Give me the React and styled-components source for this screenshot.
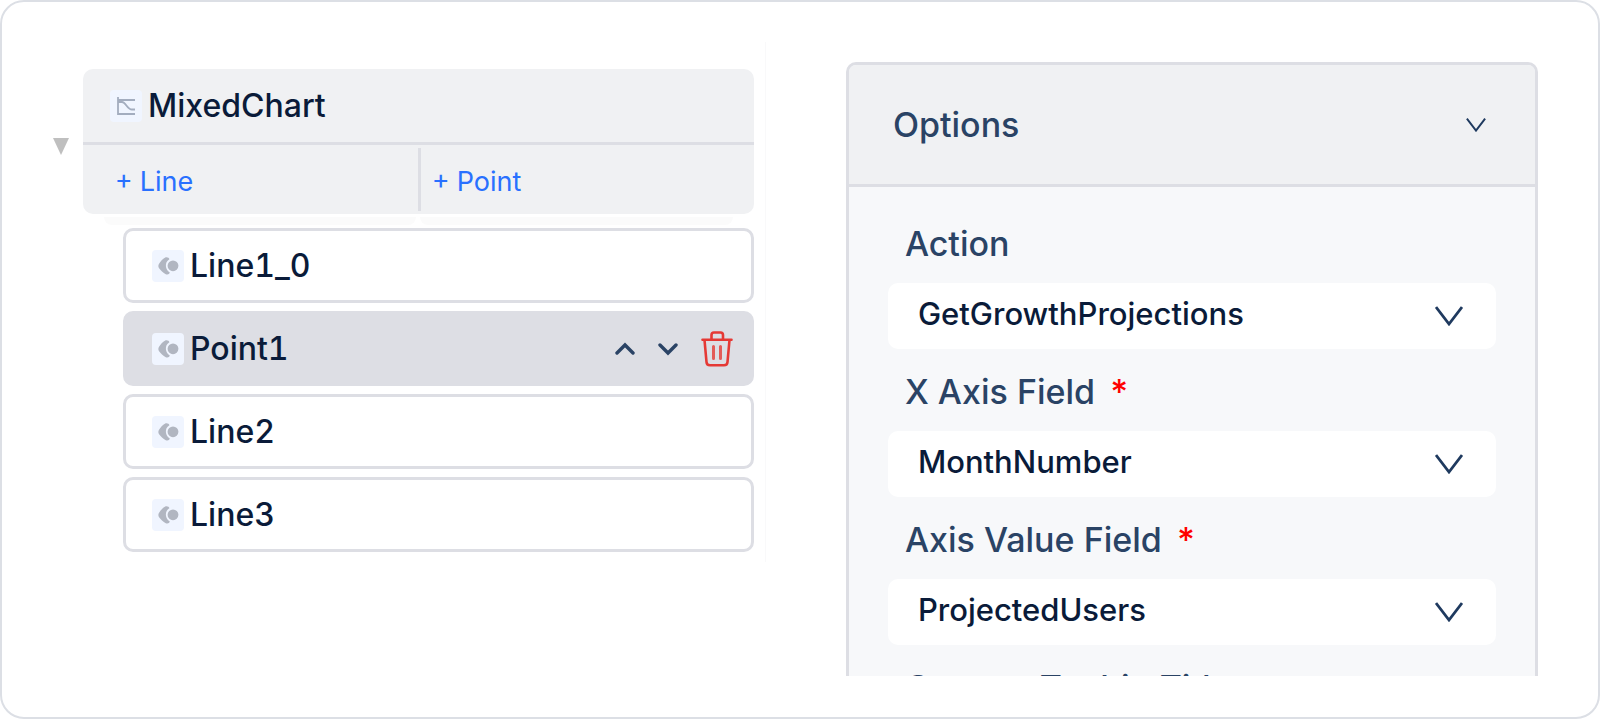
import React, { useState } from 'react';
import styled, { createGlobalStyle } from 'styled-components';

const GlobalStyle = createGlobalStyle`
  * {
    box-sizing: border-box;
  }
  body {
    margin: 0;
    background: #ffffff;
    color: #0a1b39;
    font-family: Inter, "Liberation Sans", sans-serif;
    font-optical-sizing: none;
    font-variant-numeric: tabular-nums;
  }
  button, select {
    font: inherit;
    font-variant-numeric: inherit;
    color: inherit;
  }
`;

const Page = styled.main`
  min-height: 100vh;
  display: grid;
  grid-template-columns: 1.03fr 1fr;
  column-gap: 80px;
  align-items: start;
  padding: 40px 60px 40px 51px;
  border: 2px solid #dcdfe5;
  border-radius: 24px;
`;

const Tree = styled.section`
  padding: 27px 11px 10px 0;
  border-right: 1px solid #f9f9fa;
`;

const Parent = styled.div`
  display: flex;
  align-items: center;
  gap: 14px;
`;

const Toggle = styled.button`
  display: flex;
  padding: 10px 0 0;
  border: 0;
  background: none;
`;

const ParentCard = styled.div`
  flex: 1;
  overflow: hidden;
  border-radius: 10px;
  background: #f0f1f3;
`;

const ParentTitle = styled.div`
  height: 76px;
  display: flex;
  align-items: center;
  gap: 6px;
  padding: 0 27px;
  border-bottom: 3px solid #dddee4;
`;

const AddBar = styled.div`
  display: grid;
  grid-template-columns: 1.015fr 1fr;
  padding: 3px 0;
`;

const AddButton = styled.button`
  height: 63px;
  padding: 3px 11px 0 ${props => (props.$first ? '32px' : '11px')};
  border: 0;
  border-right: ${props => (props.$first ? '3px solid #dddee4' : '0')};
  background: none;
  color: #2970ff;
  font-size: 27px;
  text-align: left;
`;

const Shades = styled.div`
  display: grid;
  grid-template-columns: 1fr 1fr;
  gap: 4px;
  margin: 3px 21px 0 51px;
`;

const Shade = styled.div`
  height: 8px;
  border-radius: 0 0 8px 8px;
  background: #fbfbfb;
`;

const List = styled.ul`
  display: flex;
  flex-direction: column;
  gap: 8px;
  margin: 3px 0 0 70px;
  padding: 0;
  list-style: none;
`;

const Item = styled.li`
  height: 75px;
  display: flex;
  align-items: center;
  gap: 6px;
  padding: 0 18px 0 26px;
  border: 3px solid #dddee4;
  border-radius: 10px;
  background: ${props => (props.$selected ? '#dddee4' : '#ffffff')};
`;

const Tile = styled.span`
  width: 32px;
  height: 32px;
  display: flex;
  align-items: center;
  justify-content: center;
  border-radius: 4px;
  background: #f0f5ff;
`;

const Name = styled.span`
  flex: 1;
  font-size: 32px;
  font-weight: 500;
  line-height: 40px;
`;

const Actions = styled.div`
  display: flex;
  align-items: center;
  gap: 23px;
`;

const IconButton = styled.button`
  display: flex;
  padding: 0;
  border: 0;
  background: none;
`;

const Panel = styled.section`
  height: 614px;
  margin-top: 20px;
  overflow: hidden;
  border: 3px solid #dddee4;
  border-bottom: 0;
  border-radius: 10px 10px 0 0;
  background: #f7f8fa;
`;

const PanelHeader = styled.button`
  width: 100%;
  height: 122px;
  display: flex;
  align-items: center;
  justify-content: space-between;
  padding: 0 49px 0 44px;
  border: 0;
  border-bottom: 3px solid #dddee4;
  background: #f0f1f3;
  color: #2a4365;
  font-size: 34px;
  font-weight: 500;
`;

const Fields = styled.div`
  padding: 14px 39px 0;
`;

const Label = styled.label`
  display: block;
  padding: 23px 17px 19px;
  color: #2a4365;
  font-size: 34px;
  font-weight: 500;
  line-height: 40px;
`;

const Required = styled.span`
  margin-left: 4px;
  color: #ff0000;
`;

const SelectBox = styled.div`
  position: relative;
`;

const Select = styled.select`
  width: 100%;
  height: 66px;
  display: block;
  padding: 0 80px 5px 30px;
  appearance: none;
  border: 0;
  border-radius: 10px;
  background: #ffffff;
  color: #0a1b39;
  font-size: 31px;
  font-weight: 500;
`;

const SelectArrow = styled.span`
  position: absolute;
  top: 0;
  right: 33px;
  height: 66px;
  display: flex;
  align-items: center;
  pointer-events: none;
`;

const ChartIcon = () => (
  <svg width="20" height="20" viewBox="0 0 20 20" fill="none" stroke="#a3adbf" strokeWidth="1.8">
    <path d="M2 1v17h17M2 4h17M2 6h4c4 0 5 7.500 10 7.500h3" />
  </svg>
);

const SeriesIcon = () => (
  <svg width="22" height="20" viewBox="0 0 22 20" fill="#b1b6c1">
    <circle cx="16" cy="9.800" r="5.400" />
    <path d="M8.700 1.300C10.400.9 12.400 2 12.400 3.300 9.600 5 8.700 7.500 8.900 10.300c.2 2.600 1.500 4.700 3.900 6.200-.3 1.700-2.200 2.500-4 1.700C6.200 16.600 3.600 14.600 1.900 12 1.200 10.700 1.200 9.400 1.900 8.100 3.600 5.200 5.900 2.700 8.700 1.300z" />
  </svg>
);

const Caret = ({ up }) => (
  <svg width="20" height="14" viewBox="0 0 20 14" fill="none" stroke="#2a4365" strokeWidth="3.400" strokeLinecap="round">
    <path d={up ? 'M2 11l8-8 8 8' : 'M2 3l8 8 8-8'} />
  </svg>
);

const TrashIcon = () => (
  <svg width="32" height="36" viewBox="0 0 32 36" fill="none" stroke="#e53935" strokeWidth="2.600" strokeLinecap="round" strokeLinejoin="round">
    <path d="M1.500 8.800h29M10.500 8.500V4a2.500 2.500 0 0 1 2.500-2.500h6.500A2.500 2.500 0 0 1 22 4v4.500M3.500 9l2 22a3.500 3.500 0 0 0 3.500 3.300h14a3.500 3.500 0 0 0 3.500-3.300l2-22" />
    <path d="M12.500 15.500v12M19.500 15.500v12" strokeWidth="3" strokeOpacity=".8" />
  </svg>
);

const Arrow = ({ width, height }) => (
  <svg width={width} height={height} viewBox="0 0 28 20" fill="none" stroke="#1f3a5f" strokeWidth="2.800">
    <path d="M1 1l13 17L27 1" />
  </svg>
);

const fields = [
  { id: 'action', label: 'Action', value: 'GetGrowthProjections' },
  { id: 'x-axis', label: 'X Axis Field', value: 'MonthNumber', required: true },
  { id: 'axis-value', label: 'Axis Value Field', value: 'ProjectedUsers', required: true },
];

const App = () => {
  const [selected, setSelected] = useState('Point1');
  const [items, setItems] = useState(['Line1_0', 'Point1', 'Line2', 'Line3']);

  const move = (index, step) => {
    const target = index + step;
    if (target < 0 || target >= items.length) return;
    const next = [...items];
    next[index] = items[target];
    next[target] = items[index];
    setItems(next);
  };

  return (
    <>
      <GlobalStyle />
      <Page>
        <Tree>
          <Parent>
            <Toggle aria-label="Collapse">
              <svg width="16" height="17" viewBox="0 0 16 17" fill="#bfbfbf">
                <path d="M0 0h16L8 17z" />
              </svg>
            </Toggle>
            <ParentCard>
              <ParentTitle>
                <Tile><ChartIcon /></Tile>
                <Name>MixedChart</Name>
              </ParentTitle>
              <AddBar>
                <AddButton $first>+ Line</AddButton>
                <AddButton>+ Point</AddButton>
              </AddBar>
            </ParentCard>
          </Parent>
          <Shades>
            <Shade />
            <Shade />
          </Shades>
          <List>
            {items.map((item, index) => (
              <Item key={item} $selected={item === selected} onClick={() => setSelected(item)}>
                <Tile><SeriesIcon /></Tile>
                <Name>{item}</Name>
                {item === selected && (
                  <Actions>
                    <IconButton aria-label="Move up" onClick={() => move(index, -1)}><Caret up /></IconButton>
                    <IconButton aria-label="Move down" onClick={() => move(index, 1)}><Caret /></IconButton>
                    <IconButton aria-label="Delete" onClick={() => setItems(items.filter(i => i !== item))}>
                      <TrashIcon />
                    </IconButton>
                  </Actions>
                )}
              </Item>
            ))}
          </List>
        </Tree>

        <Panel>
          <PanelHeader>
            Options
            <Arrow width={20} height={14} />
          </PanelHeader>
          <Fields>
            {fields.map(field => (
              <div key={field.id}>
                <Label htmlFor={field.id}>
                  {field.label} {field.required && <Required>*</Required>}
                </Label>
                <SelectBox>
                  <Select id={field.id} defaultValue={field.value}>
                    <option>{field.value}</option>
                  </Select>
                  <SelectArrow><Arrow width={28} height={20} /></SelectArrow>
                </SelectBox>
              </div>
            ))}
            <Label as="div">Custom Tooltip Title</Label>
          </Fields>
        </Panel>
      </Page>
    </>
  );
};

export default App;
